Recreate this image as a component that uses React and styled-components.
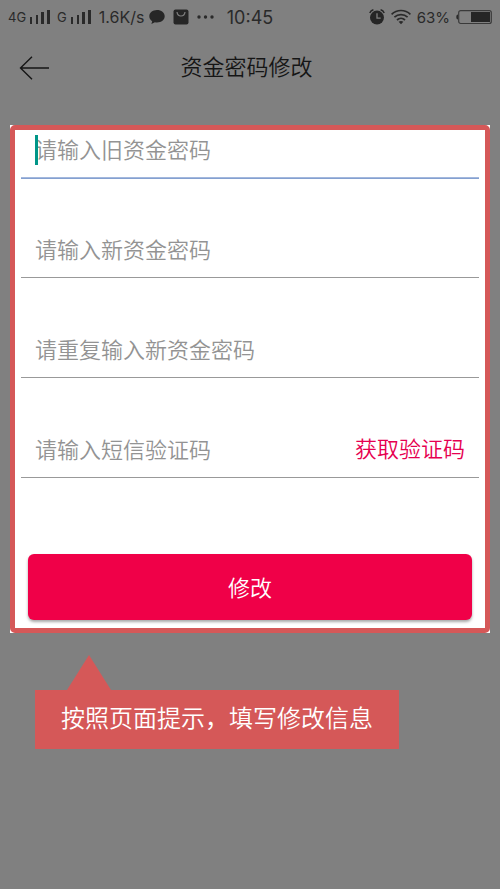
import React, { useState } from "react";
import styled, { createGlobalStyle } from "styled-components";

const fields = [
  { id: "oldPassword", type: "password", label: "请输入旧资金密码" },
  { id: "newPassword", type: "password", label: "请输入新资金密码" },
  { id: "repeatPassword", type: "password", label: "请重复输入新资金密码" },
  { id: "smsCode", type: "text", label: "请输入短信验证码", hasCode: true },
];

function SignalIcon() {
  return (
    <svg width="20" height="16" viewBox="0 0 20 16" fill="#2a2a2a" aria-hidden="true">
      <rect x="0" y="8" width="2" height="7" />
      <rect x="6" y="6" width="2" height="9" />
      <rect x="11" y="3" width="3" height="12" />
      <rect x="17" y="1" width="3" height="14" />
    </svg>
  );
}

function ChatIcon() {
  return (
    <svg width="16" height="16" viewBox="0 0 16 16" fill="#262626" aria-hidden="true">
      <path d="M8 1C3.6 1 .3 3.8.3 7.2c0 2.1 1.1 3.9 2.9 5L2.4 15l3.5-1.8c.7.1 1.4.2 2.1.2 4.4 0 7.7-2.7 7.7-6.2S12.4 1 8 1z" />
    </svg>
  );
}

function BagIcon() {
  return (
    <svg width="16" height="16" viewBox="0 0 16 16" aria-hidden="true">
      <rect x="0.5" y="0.5" width="15" height="15" rx="2" fill="#262626" />
      <path d="M4 3c.3 2.6 1.7 4 4 4s3.7-1.4 4-4" fill="none" stroke="#808080" strokeWidth="1.2" />
    </svg>
  );
}

function DotsIcon() {
  return (
    <svg width="17" height="16" viewBox="0 0 17 16" fill="#2a2a2a" aria-hidden="true">
      <circle cx="2" cy="8" r="1.7" />
      <circle cx="8.5" cy="8" r="1.7" />
      <circle cx="15" cy="8" r="1.7" />
    </svg>
  );
}

function AlarmIcon() {
  return (
    <svg width="16" height="16" viewBox="0 0 16 16" aria-hidden="true">
      <circle cx="8" cy="8.6" r="7" fill="#262626" />
      <path d="M.8 3.9C1.4 2.3 2.7 1.1 4.4.7M15.2 3.9C14.6 2.3 13.3 1.1 11.6.7" fill="none" stroke="#262626" strokeWidth="1.5" />
      <path d="M8 4.3v4.9h3.7" fill="none" stroke="#808080" strokeWidth="1.3" />
    </svg>
  );
}

function WifiIcon() {
  return (
    <svg width="20" height="16" viewBox="0 0 20 16" aria-hidden="true">
      <g fill="none" stroke="#2a2a2a" strokeWidth="1.7">
        <path d="M.6 5.3C5.8.2 14.2.2 19.4 5.3" />
        <path d="M3.4 8.2c3.7-3.5 9.5-3.5 13.2 0" />
        <path d="M6 11c2.3-2.1 5.7-2.1 8 0" />
      </g>
      <path d="M7.6 12.8c1.4-1.2 3.4-1.2 4.8 0L10 15.3z" fill="#2a2a2a" />
    </svg>
  );
}

function BatteryIcon() {
  return (
    <svg width="36" height="16" viewBox="0 0 36 16" aria-hidden="true">
      <path d="M2 5.5C.8 5.5.3 6.5.3 8s.5 2.5 1.7 2.5z" fill="#2a2a2a" />
      <rect x="2.7" y="1.7" width="32.6" height="12.8" rx="2" fill="none" stroke="#3a3a3a" strokeWidth="1.2" />
      <rect x="15" y="3" width="19" height="10" fill="#262626" />
    </svg>
  );
}

function App() {
  const [values, setValues] = useState({});
  const [focused, setFocused] = useState("oldPassword");

  const handleChange = (e) => {
    setValues({ ...values, [e.target.id]: e.target.value });
  };

  return (
    <>
      <GlobalStyle />
      <PageWrapper>
        <StatusBar>
          <StatusLeft>
            <Network>4G</Network>
            <SignalIcon />
            <Network $second>G</Network>
            <SignalIcon />
            <Speed>1.6K/s</Speed>
            <Notices>
              <ChatIcon />
              <BagIcon />
              <DotsIcon />
            </Notices>
          </StatusLeft>
          <Time>10:45</Time>
          <StatusRight>
            <AlarmIcon />
            <WifiIcon />
            <Percent>63%</Percent>
            <BatteryIcon />
          </StatusRight>
        </StatusBar>
        <Header>
          <BackButton type="button" aria-label="返回">
            <svg width="30" height="24" viewBox="0 0 30 24" fill="none" stroke="#151515" strokeWidth="1.4">
              <path d="M30 12H1.5M13 .7L1.5 12 13 23.3" />
            </svg>
          </BackButton>
          <Title>资金密码修改</Title>
        </Header>
        <Highlight>
          <Form onSubmit={(e) => e.preventDefault()}>
            {fields.map(({ id, type, label, hasCode }) => (
              <Field key={id} $active={focused === id}>
                {focused === id && !values[id] && <Caret />}
                <Input
                  id={id}
                  type={type}
                  aria-label={label}
                  placeholder={label}
                  value={values[id] || ""}
                  onChange={handleChange}
                  onFocus={() => setFocused(id)}
                />
                {hasCode && <CodeButton type="button">获取验证码</CodeButton>}
              </Field>
            ))}
            <SubmitButton type="submit">修改</SubmitButton>
          </Form>
        </Highlight>
        <Tip>
          <TipArrow />
          <TipText>按照页面提示，填写修改信息</TipText>
        </Tip>
      </PageWrapper>
    </>
  );
}

export default App;

const GlobalStyle = createGlobalStyle`
  * {
    box-sizing: border-box;
  }
  body {
    margin: 0;
    background: #808080;
    font-family: Roboto, "Noto Sans CJK SC", sans-serif;
    font-weight: 350;
  }
  button,
  input {
    padding: 0;
    border: none;
    background: none;
    font-family: inherit;
    font-weight: inherit;
  }
  svg {
    display: block;
    flex-shrink: 0;
  }
`;

const PageWrapper = styled.div`
  min-height: 100vh;
  background: #808080;
`;

const StatusBar = styled.div`
  display: grid;
  grid-template-columns: 1fr auto 1fr;
  align-items: center;
  height: 34px;
  padding: 0 8px;
  color: #2a2a2a;
  font-family: Inter, sans-serif;
  font-weight: 400;
  white-space: nowrap;
`;

const StatusLeft = styled.div`
  display: flex;
  align-items: center;
  min-width: 0;
`;

const StatusRight = styled(StatusLeft)`
  justify-content: flex-end;
  gap: 6px;
`;

const Network = styled.span`
  margin-right: 4px;
  margin-left: ${({ $second }) => ($second ? "7px" : "0")};
  font-size: 13px;
`;

const Speed = styled.span`
  margin-left: 8px;
  font-size: 16px;
`;

const Notices = styled.div`
  display: flex;
  gap: 8px;
  margin-left: 5px;
`;

const Time = styled.span`
  font-size: 18px;
`;

const Percent = styled.span`
  font-size: 15px;
`;

const Header = styled.header`
  display: grid;
  grid-template-columns: 1fr auto 1fr;
  align-items: center;
  height: 67px;
  padding: 0 26px 0 19px;
`;

const BackButton = styled.button`
  justify-self: start;
  cursor: pointer;
`;

const Title = styled.h1`
  margin: 0;
  color: #151515;
  font-size: 22px;
  font-weight: 350;
  line-height: 32px;
`;

const Highlight = styled.main`
  margin: 24px 10px 0;
  background: #fff;
`;

const Form = styled.form`
  display: flex;
  flex-direction: column;
  gap: 52px;
  padding: 0 6px 8px;
  border: 5px solid #d55858;
  border-radius: 5px;
`;

const Field = styled.div`
  position: relative;
  display: flex;
  align-items: center;
  height: 48px;
  padding: 0 14px 7px;
  border-bottom: 1px solid ${({ $active }) => ($active ? "#a3b8dd" : "#999")};
  box-shadow: ${({ $active }) => ($active ? "0 1px 0 #84a0d0" : "none")};
`;

const Caret = styled.span`
  position: absolute;
  top: 5px;
  left: 14px;
  width: 3px;
  height: 30px;
  background: #009688;
`;

const Input = styled.input`
  flex: 1;
  min-width: 0;
  height: 32px;
  color: #333;
  font-size: 22px;
  outline: none;

  &::placeholder {
    color: #939393;
    opacity: 1;
  }
`;

const CodeButton = styled.button`
  color: #e60050;
  font-size: 22px;
  line-height: 32px;
  cursor: pointer;
`;

const SubmitButton = styled.button`
  height: 66px;
  margin: 24px 7px 0;
  padding-bottom: 2px;
  border-radius: 6px;
  background: #f00048;
  box-shadow: 0 2px 3px rgba(0, 0, 0, 0.35);
  color: #fff;
  font-size: 22px;
  cursor: pointer;
`;

const Tip = styled.div`
  width: fit-content;
  margin: 22px 0 0 35px;
`;

const TipArrow = styled.div`
  width: 44px;
  height: 35px;
  margin-left: 32px;
  background: #d55858;
  clip-path: polygon(50% 0, 100% 100%, 0 100%);
`;

const TipText = styled.p`
  margin: 0;
  padding: 12px 26px;
  background: #d55858;
  color: #fff;
  font-size: 24px;
  line-height: 35px;
`;
